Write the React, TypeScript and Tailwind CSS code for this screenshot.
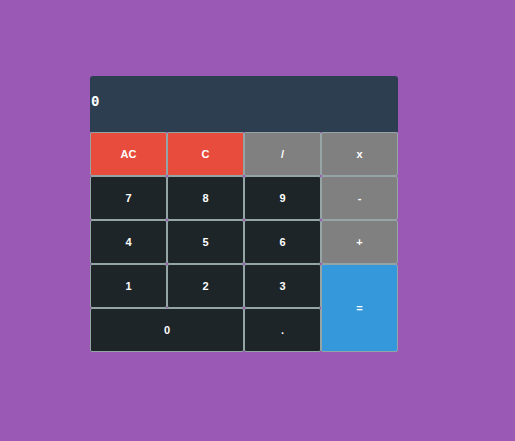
import React, { useState } from "react";

export default function App() {
  const [value, setValue] = useState("0");

  const press = (k: string) => {
    if (k === "AC") return setValue("0");
    if (k === "C") return setValue(value.length > 1 ? value.slice(0, -1) : "0");
    if (k === "=") return;
    setValue(value === "0" ? k : value + k);
  };

  const btn =
    "flex items-center justify-center border border-[#95a5a6] rounded-[2px] text-white text-[11px] font-bold pt-[1px]";

  return (
    <div className="min-h-screen w-full bg-[#9b59b6] pt-[76px] pl-[90px] font-['Liberation_Sans',Arial,sans-serif]">
      <div className="w-[308px]">
        <div className="h-[56px] bg-[#2c3e50] rounded-t-[3px] flex items-center pb-[6px]">
          <span className="text-white text-[14px] font-bold font-['DejaVu_Sans_Mono',monospace] leading-none pl-[1px]">
            {value}
          </span>
        </div>
        <div className="grid grid-cols-[repeat(4,77px)] grid-rows-[repeat(5,44px)]">
          <button onClick={() => press("AC")} className={btn + " bg-[#e74c3c]"}>AC</button>
          <button onClick={() => press("C")} className={btn + " bg-[#e74c3c]"}>C</button>
          <button onClick={() => press("/")} className={btn + " bg-[#808080]"}>/</button>
          <button onClick={() => press("x")} className={btn + " bg-[#808080]"}>x</button>

          <button onClick={() => press("7")} className={btn + " bg-[#1e2528]"}>7</button>
          <button onClick={() => press("8")} className={btn + " bg-[#1e2528]"}>8</button>
          <button onClick={() => press("9")} className={btn + " bg-[#1e2528]"}>9</button>
          <button onClick={() => press("-")} className={btn + " bg-[#808080]"}>-</button>

          <button onClick={() => press("4")} className={btn + " bg-[#1e2528]"}>4</button>
          <button onClick={() => press("5")} className={btn + " bg-[#1e2528]"}>5</button>
          <button onClick={() => press("6")} className={btn + " bg-[#1e2528]"}>6</button>
          <button onClick={() => press("+")} className={btn + " bg-[#808080]"}>+</button>

          <button onClick={() => press("1")} className={btn + " bg-[#1e2528]"}>1</button>
          <button onClick={() => press("2")} className={btn + " bg-[#1e2528]"}>2</button>
          <button onClick={() => press("3")} className={btn + " bg-[#1e2528]"}>3</button>
          <button onClick={() => press("=")} className={btn + " bg-[#3498db] row-span-2"}>=</button>

          <button onClick={() => press("0")} className={btn + " bg-[#1e2528] col-span-2"}>0</button>
          <button onClick={() => press(".")} className={btn + " bg-[#1e2528]"}>.</button>
        </div>
      </div>
    </div>
  );
}
